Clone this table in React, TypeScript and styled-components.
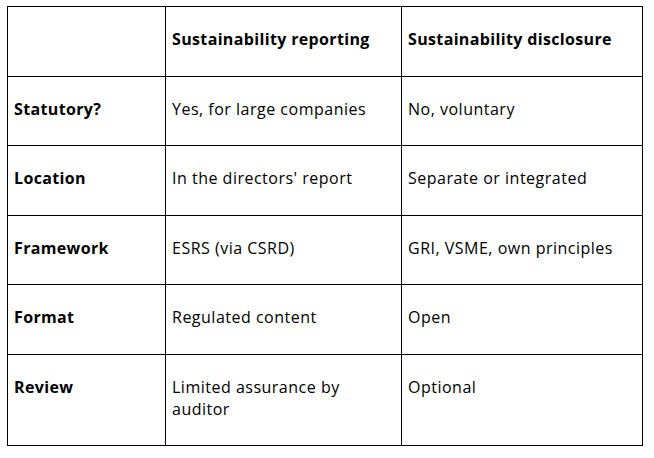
import React from "react";
import styled, { createGlobalStyle } from "styled-components";

const Global = createGlobalStyle`
  html, body { margin: 0; padding: 0; background: #ffffff; }
  body { font-family: "Open Sans", "Noto Sans", sans-serif; color: #000; }
`;

const Page = styled.div`
  padding: 6px 0 0 7px;
`;

const Table = styled.table`
  border-collapse: collapse;
  table-layout: fixed;
  width: 635px;
`;

const Col = styled.col<{ $w: number }>`
  width: ${(p) => p.$w}px;
`;

const Cell = styled.td<{ $bold?: boolean }>`
  border: 1px solid #000;
  padding: 21px 7px 25.5px 6px;
  vertical-align: top;
  font-size: 16px;
  line-height: 22px;
  font-weight: ${(p) => (p.$bold ? 700 : 400)};
  color: #000;
  letter-spacing: ${(p) => (p.$bold ? "0.35px" : "0.5px")};
`;

const rows: [string, string, string][] = [
  ["Statutory?", "Yes, for large companies", "No, voluntary"],
  ["Location", "In the directors' report", "Separate or integrated"],
  ["Framework", "ESRS (via CSRD)", "GRI, VSME, own principles"],
  ["Format", "Regulated content", "Open"],
  ["Review", "Limited assurance by auditor", "Optional"],
];

export default function App() {
  return (
    <>
      <Global />
      <Page>
        <Table>
          <colgroup>
            <Col $w={158} />
            <Col $w={236} />
            <Col $w={241} />
          </colgroup>
          <thead>
            <tr>
              <Cell $bold></Cell>
              <Cell $bold>Sustainability reporting</Cell>
              <Cell $bold>Sustainability disclosure</Cell>
            </tr>
          </thead>
          <tbody>
            {rows.map(([a, b, c]) => (
              <tr key={a}>
                <Cell $bold>{a}</Cell>
                <Cell>{b}</Cell>
                <Cell>{c}</Cell>
              </tr>
            ))}
          </tbody>
        </Table>
      </Page>
    </>
  );
}
